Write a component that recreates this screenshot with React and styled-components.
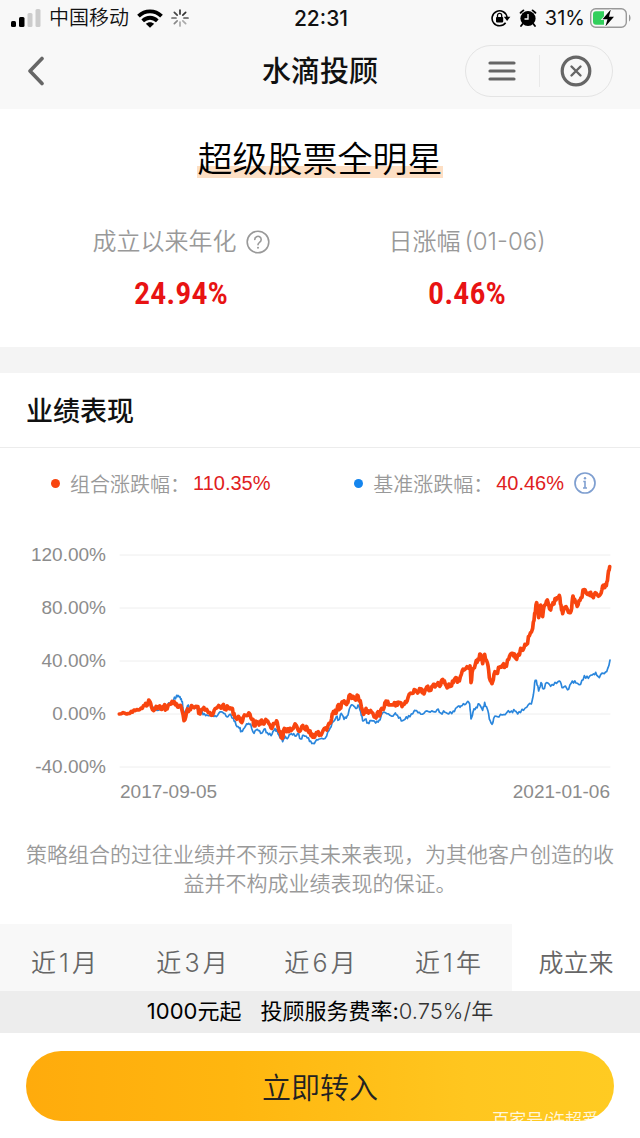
import styled, { createGlobalStyle } from "styled-components";

const GlobalStyle = createGlobalStyle`
	* {
		box-sizing: border-box;
	}
	body {
		margin: 0;
		background-color: white;
		color: #111;
		font-family: "Liberation Sans", "Noto Sans CJK SC", sans-serif;
	}
	h1, h2, p, dl, dt, dd {
		margin: 0;
		font-weight: 400;
	}
	button {
		border: 0;
		padding: 0;
		background: none;
		color: inherit;
		font: inherit;
		cursor: pointer;
	}
	svg {
		display: block;
	}
`;

const Page = styled.div`
	display: flex;
	flex-direction: column;
	min-height: 100vh;
`;

const TopArea = styled.header`
	background-color: #f8f8f8;
`;

const StatusBar = styled.div`
	display: grid;
	grid-template-columns: 1fr auto 1fr;
	align-items: center;
	height: 36px;
	padding: 0 9px 0 11px;
	font-size: 20px;
`;

const StatusGroup = styled.div`
	display: flex;
	align-items: center;
	justify-content: ${(props) => (props.$end ? "flex-end" : "flex-start")};
	gap: 8px;
`;

const Carrier = styled.span`
	font-weight: 350;
	line-height: 24px;
`;

const Clock = styled.span`
	font-family: Inter, sans-serif;
	font-weight: 500;
	font-size: 21px;
`;

const Battery = styled.div`
	display: flex;
	align-items: center;
	gap: 5px;
	font-family: Inter, sans-serif;
	font-size: 20px;
`;

const NavBar = styled.nav`
	display: grid;
	grid-template-columns: 1fr auto 1fr;
	align-items: center;
	height: 73px;
	padding: 0 27px 3px;
`;

const NavTitle = styled.h1`
	font-size: 29px;
	font-weight: 500;
	line-height: 40px;
	padding-top: 2px;
`;

const Capsule = styled.div`
	display: flex;
	justify-self: end;
	align-items: center;
	width: 148px;
	height: 52px;
	border: 1px solid #e4e4e4;
	border-radius: 26px;
`;

const CapsuleButton = styled.button`
	flex: 1;
	display: flex;
	justify-content: center;
	& + & {
		border-left: 1px solid #e9e9e9;
	}
`;

const Hero = styled.section`
	display: flex;
	flex-direction: column;
	align-items: center;
	padding: 32px 0 34px;
`;

const FundName = styled.h2`
	font-size: 35px;
	font-weight: 350;
	line-height: 37px;
	color: #000;
	background: linear-gradient(#fddfc4, #fddfc4) 0 100% / 100% 12px no-repeat;
`;

const Stats = styled.dl`
	display: grid;
	grid-template-columns: 1fr 1fr;
	width: 100%;
	padding: 0 30px 0 38px;
	margin-top: 45px;
`;

const Stat = styled.div`
	display: flex;
	flex-direction: column;
	align-items: center;
`;

const StatLabel = styled.dt`
	display: flex;
	align-items: center;
	gap: 9px;
	color: #999;
	font-size: 24px;
	font-weight: 350;
	line-height: 38px;
`;

const DateText = styled.span`
	font-family: Inter, sans-serif;
	margin-left: -5px;
`;

const StatValue = styled.dd`
	color: #e81313;
	font-family: "Roboto Condensed", Roboto, sans-serif;
	font-size: 32px;
	font-weight: 600;
	line-height: 40px;
	margin-top: 12px;
`;

const Divider = styled.div`
	height: 26px;
	background-color: #f4f4f4;
`;

const SectionTitle = styled.h2`
	padding: 4px 26px 0;
	font-size: 27px;
	font-weight: 500;
	line-height: 70px;
	border-bottom: 1px solid #ececec;
`;

const Legend = styled.div`
	display: flex;
	justify-content: space-between;
	align-items: center;
	height: 70px;
	padding: 0 44px 0 51px;
`;

const LegendItem = styled.div`
	display: flex;
	align-items: center;
	color: #999;
	font-size: 20px;
	font-weight: 350;
`;

const Dot = styled.i`
	width: 9px;
	height: 9px;
	margin-right: 10px;
	border-radius: 50%;
	background-color: ${(props) => props.$color};
`;

const LegendValue = styled.span`
	margin-left: 3px;
	margin-right: 10px;
	color: #e02020;
`;

const ChartGrid = styled.div`
	display: grid;
	grid-template-columns: 80px 1fr;
	column-gap: 14px;
	padding: 27px 30px 0 26px;
	color: #8c8c8c;
	font-size: 19px;
	line-height: 20px;
`;

const AxisY = styled.div`
	display: flex;
	flex-direction: column;
	justify-content: space-between;
	text-align: right;
`;

const Plot = styled.div`
	padding: 10px 0;
	svg {
		width: 100%;
		overflow: visible;
	}
`;

const AxisX = styled.div`
	grid-column: 2;
	display: flex;
	justify-content: space-between;
	margin-top: 5px;
`;

const Disclaimer = styled.p`
	padding: 0 26px;
	margin: 38px 0 26px;
	color: #999;
	font-size: 21px;
	font-weight: 350;
	line-height: 29px;
	text-align: center;
`;

const Tabs = styled.div`
	display: grid;
	grid-template-columns: repeat(5, 1fr);
	height: 67px;
`;

const Tab = styled.button`
	background-color: ${(props) => (props.$active ? "white" : "#f8f8f8")};
	color: #666;
	font-family: Inter, "Noto Sans CJK SC", sans-serif;
	font-size: 25px;
	font-weight: 350;
	text-autospace: normal;
	padding-top: 6px;
`;

const FeeBar = styled.div`
	display: flex;
	justify-content: center;
	gap: 19px;
	height: 42px;
	background-color: #ededed;
	color: #000;
	font-family: Inter, "Noto Sans CJK SC", sans-serif;
	font-size: 22px;
	line-height: 40px;
`;

const Rate = styled.span`
	color: #333;
	font-weight: 350;
`;

const Footer = styled.footer`
	position: relative;
	padding: 18px 26px 17px;
`;

const BuyButton = styled.button`
	width: 100%;
	height: 70px;
	border-radius: 35px;
	background: linear-gradient(90deg, #ffab0c, #ffb60f 35%, #ffc61f 75%, #ffcb22);
	color: #222;
	font-size: 29px;
	font-weight: 350;
`;

const Watermark = styled.span`
	position: absolute;
	right: 41px;
	bottom: 7px;
	color: rgba(255, 255, 255, 0.85);
	font-size: 17px;
	line-height: 20px;
`;

const tabs = ["近1月", "近3月", "近6月", "近1年", "成立来"];
const levels = ["120.00%", "80.00%", "40.00%", "0.00%", "-40.00%"];

const portfolio = [
	[-2, 477], [15, 475], [30, 475], [42, 465], [55, 465], [67, 460], [77, 445], [83, 448], [88, 437], [94, 455],
	[105, 463], [115, 455], [122, 462], [132, 453], [138, 461], [148, 448], [160, 445], [170, 447], [178, 453],
	[184, 458], [192, 497], [200, 470], [208, 465], [218, 455], [232, 455], [238, 475], [245, 463], [255, 465],
	[270, 473], [280, 475], [288, 460], [300, 455], [308, 451], [315, 463], [325, 457], [335, 463], [342, 475],
	[350, 493], [358, 490], [363, 500], [370, 487], [380, 482], [390, 478], [397, 493], [403, 513], [410, 500],
	[417, 510], [425, 495], [432, 507], [440, 497], [450, 510], [458, 515], [465, 505], [472, 503], [478, 530],
	[487, 550], [493, 520], [500, 530], [510, 520], [520, 520], [528, 510], [535, 527], [545, 515], [555, 523],
	[562, 520], [568, 533], [575, 537], [583, 547], [592, 533], [600, 537], [610, 525], [620, 525], [627, 505],
	[635, 490], [640, 470], [648, 475], [653, 453], [660, 460], [667, 440], [675, 445], [682, 443], [687, 422],
	[695, 430], [700, 425], [710, 430], [714, 422], [724, 455], [731, 478], [738, 460], [746, 474], [755, 472],
	[766, 487], [772, 473], [778, 483], [785, 460], [793, 455], [798, 438], [806, 450], [820, 450], [830, 443],
	[838, 443], [846, 455], [856, 440], [864, 428], [876, 415], [886, 405], [896, 410], [904, 402], [912, 417],
	[920, 396], [930, 402], [938, 392], [945, 396], [954, 383], [962, 390], [968, 373], [976, 388], [984, 396],
	[992, 388], [1000, 383], [1007, 368], [1015, 378], [1024, 358], [1032, 345], [1041, 335], [1050, 333],
	[1053, 383], [1058, 345], [1066, 328], [1074, 312], [1082, 298], [1088, 326], [1094, 298], [1102, 323],
	[1108, 368], [1116, 386], [1122, 358], [1130, 355], [1138, 338], [1148, 330], [1156, 333], [1166, 313],
	[1175, 295], [1183, 297], [1190, 313], [1198, 300], [1202, 280], [1212, 278], [1220, 268], [1228, 243],
	[1238, 220], [1244, 175], [1250, 143], [1256, 188], [1262, 150], [1268, 185], [1274, 150], [1282, 135],
	[1292, 165], [1299, 143], [1308, 135], [1318, 121], [1323, 150], [1328, 176], [1338, 155], [1349, 173],
	[1355, 160], [1359, 123], [1367, 143], [1374, 150], [1383, 128], [1392, 104], [1402, 118], [1412, 112],
	[1420, 128], [1429, 115], [1438, 122], [1446, 103], [1452, 92], [1459, 92], [1464, 60], [1469, 35],
];

const benchmark = [
	[-2, 477], [15, 475], [30, 475], [42, 466], [55, 464], [67, 460], [77, 447], [88, 443], [94, 456], [105, 462],
	[122, 460], [138, 456], [150, 445], [160, 437], [170, 421], [176, 423], [182, 433], [187, 440], [192, 482],
	[198, 466], [205, 450], [213, 460], [222, 455], [232, 462], [242, 470], [253, 476], [264, 482], [275, 484],
	[285, 482], [296, 475], [308, 472], [318, 483], [328, 479], [340, 490], [348, 510], [358, 520], [364, 528],
	[373, 519], [383, 508], [392, 507], [402, 535], [412, 523], [422, 535], [432, 523], [442, 533], [453, 542],
	[462, 526], [471, 523], [480, 548], [488, 560], [496, 544], [505, 547], [514, 536], [525, 543], [533, 535],
	[542, 552], [551, 541], [562, 549], [572, 558], [583, 566], [593, 555], [605, 550], [620, 543], [630, 520],
	[640, 500], [649, 485], [656, 495], [664, 475], [672, 493], [682, 482], [688, 462], [698, 450], [707, 460],
	[714, 450], [722, 470], [728, 498], [735, 493], [744, 503], [753, 497], [767, 504], [778, 495], [784, 480],
	[796, 473], [810, 481], [823, 478], [832, 480], [844, 498], [855, 493], [866, 482], [878, 477], [886, 467],
	[898, 472], [912, 475], [926, 470], [940, 470], [951, 464], [962, 474], [975, 472], [986, 477], [1000, 468],
	[1010, 458], [1020, 457], [1030, 446], [1041, 442], [1049, 447], [1053, 492], [1059, 471], [1068, 457],
	[1078, 448], [1088, 466], [1094, 442], [1102, 462], [1108, 492], [1116, 508], [1121, 490], [1132, 485],
	[1146, 480], [1160, 473], [1174, 468], [1185, 468], [1193, 477], [1206, 463], [1220, 457], [1234, 447],
	[1240, 420], [1244, 383], [1249, 376], [1256, 408], [1263, 383], [1270, 402], [1280, 383], [1292, 394],
	[1305, 382], [1318, 378], [1326, 398], [1336, 393], [1346, 403], [1357, 378], [1368, 384], [1382, 388],
	[1393, 362], [1405, 370], [1417, 360], [1427, 352], [1438, 368], [1450, 355], [1460, 350], [1470, 315],
];

// splits every step into shorter ones and gives them a day-to-day ripple
function toPoints(series, ripple) {
	const points = [];
	series.forEach(([x, y], i) => {
		points.push(`${x},${y}`);
		const next = series[i + 1];
		if (!next) return;
		const calm = x < 70 ? 0.4 : 1;
		points.push(`${x + (next[0] - x) / 3},${(y * 2 + next[1]) / 3 + ripple * calm * Math.sin(i * 2.3)}`);
		points.push(`${x + ((next[0] - x) * 2) / 3},${(y + next[1] * 2) / 3 - ripple * calm * Math.cos(i * 1.7)}`);
	});
	return points.join(" ");
}

function SignalIcon() {
	return (
		<svg width="30" height="18" viewBox="0 0 30 18">
			<rect x="0" y="12" width="5" height="6" rx="1.5" fill="#000" />
			<rect x="8" y="8" width="5.5" height="10" rx="1.5" fill="#000" />
			<rect x="16.5" y="4" width="5" height="14" rx="1.5" fill="#ccc" />
			<rect x="24.5" y="0" width="5" height="18" rx="1.5" fill="#ccc" />
		</svg>
	);
}

function WifiIcon() {
	return (
		<svg width="26" height="19" viewBox="0 0 26 19" fill="none" stroke="#000" strokeWidth="3.8">
			<path d="M1.5 7.2C8 .8 18 .8 24.5 7.2" />
			<path d="M5.7 11.8C10 7.7 16 7.7 20.3 11.8" />
			<path d="M13 18.8 8.8 14.8c2.4-2.2 6-2.2 8.4 0z" fill="#000" stroke="none" />
		</svg>
	);
}

function Spinner() {
	const shades = ["#333", "#333", "#555", "#aaa", "#aaa", "#888", "#666", "#444"];
	return (
		<svg width="18" height="18" viewBox="-9 -9 18 18">
			{shades.map((shade, i) => (
				<path key={i} d="M0-4V-8" transform={`rotate(${i * 45})`} stroke={shade} strokeWidth="1.7" strokeLinecap="round" />
			))}
		</svg>
	);
}

function LockIcon() {
	return (
		<svg width="20" height="18" viewBox="0 0 20 18">
			<path d="M14.6 13.8A7.5 7.5 0 1 1 16 8.2" fill="none" stroke="#000" strokeWidth="1.6" />
			<path d="M12.8 7.8h6.6L16.1 12z" fill="#000" />
			<rect x="5" y="8" width="7.2" height="5.4" rx=".8" fill="#000" />
			<path d="M6.5 8V6.4a2.1 2.1 0 0 1 4.2 0V8" fill="none" stroke="#000" strokeWidth="1.3" />
		</svg>
	);
}

function AlarmIcon() {
	return (
		<svg width="18" height="18" viewBox="0 0 18 18">
			<circle cx="9" cy="9.5" r="7.6" />
			<path d="M1.6 3.8 4.4 1.4M16.4 3.8 13.6 1.4M3.5 15 2 17M14.5 15l1.5 2" stroke="#000" strokeWidth="1.8" strokeLinecap="round" />
			<path d="M9 5v5H5.5" fill="none" stroke="#fff" strokeWidth="1.3" />
		</svg>
	);
}

function BatteryIcon() {
	return (
		<svg width="41" height="20" viewBox="0 0 41 20">
			<rect x=".7" y=".7" width="35.6" height="18.6" rx="5" fill="none" stroke="#999" strokeWidth="1.4" />
			<path d="M39 6.5c2 1.2 2 5.8 0 7z" fill="#999" />
			<path d="M6 3.2h8v13.6H6a3 3 0 0 1-3-3V6.2a3 3 0 0 1 3-3z" fill="#32cf5c" />
			<path d="M20.8 1.5 12.5 11.2h5L15.4 18.5 24 8.8h-5z" fill="#000" stroke="#f8f8f8" strokeWidth="1.6" paintOrder="stroke" />
		</svg>
	);
}

function BackIcon() {
	return (
		<svg width="18" height="30" viewBox="0 0 18 30" fill="none" stroke="#666" strokeWidth="3.6" strokeLinecap="round" strokeLinejoin="round">
			<path d="M15 2.5 3 15l12 12.5" />
		</svg>
	);
}

function MenuIcon() {
	return (
		<svg width="28" height="20" viewBox="0 0 28 20" stroke="#666" strokeWidth="3.2" strokeLinecap="round">
			<path d="M2 2h24M2 10h24M2 18h24" />
		</svg>
	);
}

function CloseIcon() {
	return (
		<svg width="32" height="32" viewBox="0 0 32 32" fill="none" stroke="#666">
			<circle cx="16" cy="16" r="13.8" strokeWidth="3.2" />
			<path d="M11.5 11.5l9 9M20.5 11.5l-9 9" strokeWidth="2.4" strokeLinecap="round" />
		</svg>
	);
}

function HelpIcon() {
	return (
		<svg width="24" height="24" viewBox="0 0 24 24" fill="none" stroke="#999" strokeWidth="1.6">
			<circle cx="12" cy="12" r="10.8" />
			<path d="M8.8 9.4a3.2 3.2 0 1 1 4.8 2.9c-1.1.7-1.6 1.2-1.6 2.5" strokeLinecap="round" />
			<circle cx="12" cy="17.8" r="1" fill="#999" stroke="none" />
		</svg>
	);
}

function InfoIcon() {
	return (
		<svg width="22" height="22" viewBox="0 0 22 22" fill="none" stroke="#7f9fd0">
			<circle cx="11" cy="11" r="10" strokeWidth="1.7" />
			<path d="M9.3 9.5H11V16M9 16h4" strokeWidth="1.6" />
			<circle cx="11" cy="6.2" r="1.2" fill="#7f9fd0" stroke="none" />
		</svg>
	);
}

function Chart() {
	return (
		<ChartGrid>
			<AxisY>
				{levels.map((level) => (
					<span key={level}>{level}</span>
				))}
			</AxisY>
			<Plot>
				<svg viewBox="0 0 1470 636" role="img" aria-label="业绩表现" fill="none" strokeLinejoin="round" strokeLinecap="round">
					{levels.map((level, i) => (
						<path key={level} d={`M0 ${i * 159}H1470`} stroke="#eee" strokeWidth="3" />
					))}
					<polyline points={toPoints(benchmark, 5)} stroke="#2a86dc" strokeWidth="5" />
					<polyline points={toPoints(portfolio, 7)} stroke="#f8450f" strokeWidth="11" />
				</svg>
			</Plot>
			<AxisX>
				<span>2017-09-05</span>
				<span>2021-01-06</span>
			</AxisX>
		</ChartGrid>
	);
}

function App() {
	return (
		<Page>
			<GlobalStyle />
			<TopArea>
				<StatusBar>
					<StatusGroup>
						<SignalIcon />
						<Carrier>中国移动</Carrier>
						<WifiIcon />
						<Spinner />
					</StatusGroup>
					<Clock>22:31</Clock>
					<StatusGroup $end>
						<LockIcon />
						<AlarmIcon />
						<Battery>
							31%
							<BatteryIcon />
						</Battery>
					</StatusGroup>
				</StatusBar>
				<NavBar>
					<button aria-label="返回">
						<BackIcon />
					</button>
					<NavTitle>水滴投顾</NavTitle>
					<Capsule>
						<CapsuleButton aria-label="菜单">
							<MenuIcon />
						</CapsuleButton>
						<CapsuleButton aria-label="关闭">
							<CloseIcon />
						</CapsuleButton>
					</Capsule>
				</NavBar>
			</TopArea>

			<Hero>
				<FundName>超级股票全明星</FundName>
				<Stats>
					<Stat>
						<StatLabel>
							成立以来年化
							<button aria-label="说明">
								<HelpIcon />
							</button>
						</StatLabel>
						<StatValue>24.94%</StatValue>
					</Stat>
					<Stat>
						<StatLabel>
							日涨幅<DateText>(01-06)</DateText>
						</StatLabel>
						<StatValue>0.46%</StatValue>
					</Stat>
				</Stats>
			</Hero>
			<Divider />

			<SectionTitle>业绩表现</SectionTitle>
			<Legend>
				<LegendItem>
					<Dot $color="#f8450f" />
					组合涨跌幅：<LegendValue>110.35%</LegendValue>
				</LegendItem>
				<LegendItem>
					<Dot $color="#1485ee" />
					基准涨跌幅：<LegendValue>40.46%</LegendValue>
					<button aria-label="基准说明">
						<InfoIcon />
					</button>
				</LegendItem>
			</Legend>
			<Chart />
			<Disclaimer>策略组合的过往业绩并不预示其未来表现，为其他客户创造的收益并不构成业绩表现的保证。</Disclaimer>

			<Tabs>
				{tabs.map((tab) => (
					<Tab key={tab} $active={tab === "成立来"}>
						{tab}
					</Tab>
				))}
			</Tabs>
			<FeeBar>
				<span>1000元起</span>
				<span>
					投顾服务费率:<Rate>0.75%/年</Rate>
				</span>
			</FeeBar>
			<Footer>
				<BuyButton>立即转入</BuyButton>
				<Watermark>百家号/许超爱</Watermark>
			</Footer>
		</Page>
	);
}

export default App;
